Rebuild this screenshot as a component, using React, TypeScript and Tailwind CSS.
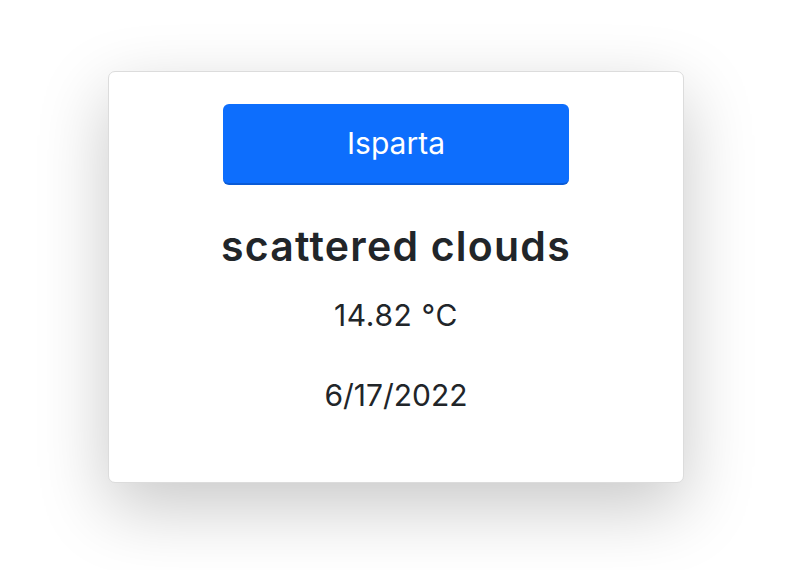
export default function App() {
  return (
    <div
      className="flex min-h-[570px] w-full items-start bg-white pl-[108px] pt-[71px]"
      style={{ fontFamily: "Inter, 'Noto Sans', sans-serif" }}
    >
      <div className="flex h-[412px] w-[576px] flex-col items-center rounded-[7px] border border-[#dcdcdc] bg-white pt-[32px] text-[#212529] shadow-[0_24px_70px_rgba(0,0,0,0.22)]">
        <button className="flex h-[81px] w-[346px] items-center justify-center rounded-[6px] border-b-2 border-[#0a5bd6] bg-[#0d6efd] text-[30px] text-white">
          Isparta
        </button>
        <h1 className="mt-[37px] text-[41px] font-semibold leading-[48px] tracking-[0.03em]">scattered clouds</h1>
        <p className="mt-[27px] text-[30px] leading-[36px] tracking-[0.02em]">14.82 °C</p>
        <p className="mt-[44px] text-[30px] leading-[36px]">6/17/2022</p>
      </div>
    </div>
  );
}
